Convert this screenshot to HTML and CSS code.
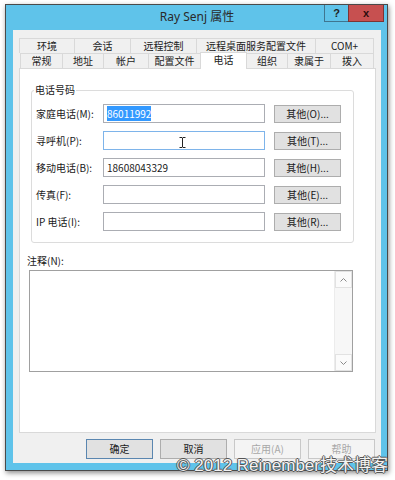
FILE: index.html
```html
<!doctype html>
<html lang="zh-CN">
	<head>
		<meta charset="UTF-8" />
		<meta name="viewport" content="width=device-width, initial-scale=1.0" />
		<title>Ray Senj 属性</title>
		<link rel="stylesheet" href="styles.css">
	</head>
	<body>
		<div class="window">
			<div class="titlebar">
				<span></span>
				<div class="title">Ray Senj 属性</div>
				<div class="caption">
					<div class="cbtn help">?</div>
					<div class="cbtn close">x</div>
				</div>
			</div>

			<div class="client">
				<div class="tabs">
					<div class="tab-row back">
						<div class="tab" style="width:56px">环境</div>
						<div class="tab" style="width:57px">会话</div>
						<div class="tab" style="width:67px">远程控制</div>
						<div class="tab" style="width:120px">远程桌面服务配置文件</div>
						<div class="tab" style="width:59px">COM+</div>
					</div>
					<div class="tab-row front">
						<div class="tab" style="width:43px">常规</div>
						<div class="tab" style="width:42px">地址</div>
						<div class="tab" style="width:46px">帐户</div>
						<div class="tab" style="width:53px">配置文件</div>
						<div class="tab active" style="width:47px">电话</div>
						<div class="tab" style="width:42px">组织</div>
						<div class="tab" style="width:44px">隶属于</div>
						<div class="tab" style="width:44px">拨入</div>
					</div>
				</div>

				<div class="panel">
					<fieldset class="group">
						<legend>电话号码</legend>
						<div class="row">
							<span class="lbl">家庭电话(M):</span>
							<div class="field"><span class="sel">86011992</span></div>
							<button class="btn">其他(O)...</button>
						</div>
						<div class="row">
							<span class="lbl">寻呼机(P):</span>
							<div class="field hover">
								<svg class="ibeam" width="7" height="11" viewBox="0 0 7 11">
									<path d="M0.5 0.5h2.5l0.5 0.5 0.5-0.5h2.5M3.5 1v9M0.5 10.5h2.5l0.5-0.5 0.5 0.5h2.5" fill="none" stroke="#222" stroke-width="1"/>
								</svg>
							</div>
							<button class="btn">其他(T)...</button>
						</div>
						<div class="row">
							<span class="lbl">移动电话(B):</span>
							<div class="field">18608043329</div>
							<button class="btn">其他(H)...</button>
						</div>
						<div class="row">
							<span class="lbl">传真(F):</span>
							<div class="field"></div>
							<button class="btn">其他(E)...</button>
						</div>
						<div class="row">
							<span class="lbl">IP 电话(I):</span>
							<div class="field"></div>
							<button class="btn">其他(R)...</button>
						</div>
					</fieldset>

					<div class="notes-label">注释(N):</div>
					<div class="notes">
						<div class="scrollbar">
							<div class="arrow up">
								<svg width="7" height="4" viewBox="0 0 7 4"><path d="M0.5 3.5l3-3 3 3" fill="none" stroke="#8a8a8a"/></svg>
							</div>
							<div class="track"></div>
							<div class="arrow down">
								<svg width="7" height="4" viewBox="0 0 7 4"><path d="M0.5 0.5l3 3 3-3" fill="none" stroke="#8a8a8a"/></svg>
							</div>
						</div>
					</div>
				</div>

				<div class="actions">
					<button class="btn default">确定</button>
					<button class="btn">取消</button>
					<button class="btn" disabled>应用(A)</button>
					<button class="btn" disabled>帮助</button>
				</div>
			</div>
		</div>

		<div class="watermark">© 2012 Reinember技术博客</div>
	</body>
</html>
```

FILE: styles.css
```css
body {
	margin: 0;
	width: 395px;
	height: 480px;
	overflow: hidden;
	position: relative;
	background: #fff;
	font-family: "Noto Sans CJK SC", "Noto Sans", sans-serif;
	font-size: 10px;
	color: #1a1a1a;
}
.window {
	margin: 4px 0 0 5px;
	width: 383px;
	box-sizing: border-box;
	border: 1px solid #4a4a4a;
	background: #5fc3ea;
	padding: 0 6px 7px 7px;
	box-shadow: 1px 2px 5px rgba(0, 0, 0, 0.45);
}
.titlebar {
	height: 25px;
	display: grid;
	grid-template-columns: 1fr auto 1fr;
	align-items: start;
}
.title {
	font-family: "Noto Sans", "Noto Sans CJK SC", sans-serif;
	font-size: 12px;
	line-height: 24px;
	color: #2a2a2a;
}
.caption {
	justify-self: end;
	display: flex;
	margin-right: -3px;
}
.cbtn {
	height: 17px;
	box-sizing: border-box;
	text-align: center;
	font-family: "Liberation Sans", sans-serif;
	font-weight: bold;
	font-size: 11px;
	line-height: 16px;
	color: #222;
	border: 1px solid #3f7590;
	border-top: none;
}
.help {
	width: 25px;
	background: #5fc3ea;
}
.close {
	width: 36px;
	margin-left: -1px;
	background: #c75050;
	border-color: #7d3434;
	color: #2b0d0d;
}
.client {
	background: #f0f0f0;
	padding: 8px 5px 4px 6px;
}
.tab-row {
	display: flex;
	height: 15px;
}
.tab-row.front {
	padding-left: 1px;
	align-items: flex-end;
}
.tab {
	box-sizing: border-box;
	height: 15px;
	border: 1px solid #d9d9d9;
	border-bottom: none;
	margin-left: -1px;
	background: #f0f0f0;
	text-align: center;
	line-height: 14px;
	white-space: nowrap;
	color: #222;
}
.tab:first-child {
	margin-left: 0;
}
.tab.active {
	height: 17px;
	margin-bottom: -1px;
	background: #fff;
	position: relative;
	z-index: 1;
}
.panel {
	height: 365px;
	box-sizing: border-box;
	background: #fff;
	border: 1px solid #d9d9d9;
	padding-top: 14px;
}
.group {
	margin: 0 0 0 11px;
	width: 323px;
	box-sizing: border-box;
	border: 1px solid #dcdcdc;
	border-radius: 3px;
	padding: 7px 4px 11px 4px;
}
.group legend {
	padding: 0 1px;
	margin-left: -2px;
	line-height: 14px;
}
.row {
	display: flex;
	align-items: center;
	height: 19px;
}
.row + .row {
	margin-top: 8px;
}
.lbl {
	width: 67px;
	white-space: nowrap;
}
.field {
	position: relative;
	width: 162px;
	height: 19px;
	box-sizing: border-box;
	border: 1px solid #abadb3;
	background: #fff;
	padding: 0 3px;
	line-height: 17px;
}
.field.hover {
	border-color: #7eb4ea;
}
.sel {
	background: #3399ff;
	color: #fff;
}
.ibeam {
	position: absolute;
	left: 75px;
	top: 5px;
}
.btn {
	width: 67px;
	height: 18px;
	padding: 0;
	box-sizing: border-box;
	border: 1px solid #adadad;
	background: #e1e1e1;
	font-family: inherit;
	font-size: 10px;
	line-height: 16px;
	color: #1a1a1a;
}
.row .btn {
	margin-left: 9px;
}
.notes-label {
	margin: 11px 0 0 7px;
	line-height: 14px;
}
.notes {
	margin: 2px 0 0 9px;
	width: 324px;
	height: 102px;
	box-sizing: border-box;
	border: 1px solid #a0a0a0;
	display: flex;
	justify-content: flex-end;
}
.scrollbar {
	width: 17px;
	display: flex;
	flex-direction: column;
	background: #f7f7f7;
	border-left: 1px solid #ececec;
}
.arrow {
	height: 15px;
	display: flex;
	align-items: center;
	justify-content: center;
	border: 1px solid #e2e2e2;
	background: #fbfbfb;
}
.track {
	flex: 1;
}
.actions {
	display: flex;
	justify-content: flex-end;
	gap: 7px;
	margin: 6px 1px 0 0;
}
.actions .btn {
	height: 20px;
	line-height: 18px;
}
.btn.default {
	border-color: #5a86b0;
}
.btn:disabled {
	background: #f4f4f4;
	border-color: #c8c8c8;
	color: #a8a8a8;
}
.watermark {
	position: absolute;
	right: 7px;
	top: 456px;
	font-family: "Liberation Sans", "Noto Sans CJK SC", sans-serif;
	font-size: 17px;
	line-height: 20px;
	white-space: nowrap;
	color: #f2f2f2;
	text-shadow: -1px 0 #555, 1px 0 #555, 0 -1px #555, 0 1px #555;
}
```
